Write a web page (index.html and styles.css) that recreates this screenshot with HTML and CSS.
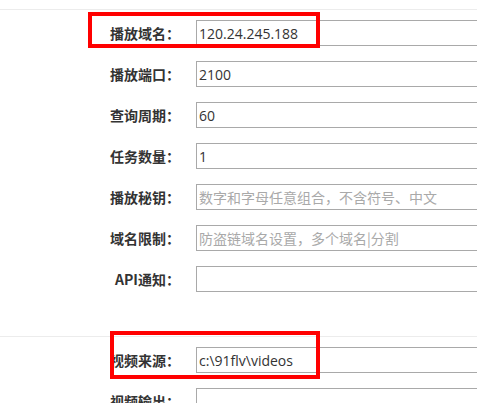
FILE: index.html
```html
<!DOCTYPE html>
<html lang="zh-CN">
<head>
<meta charset="utf-8">
<title>播放设置</title>
<link rel="stylesheet" href="styles.css">
</head>
<body>
<div class="page">
  <section class="group group-play">
    <div class="row"><label class="lbl">播放域名：</label><input class="field" type="text" value="120.24.245.188"></div>
    <div class="row"><label class="lbl">播放端口：</label><input class="field" type="text" value="2100"></div>
    <div class="row"><label class="lbl">查询周期：</label><input class="field" type="text" value="60"></div>
    <div class="row"><label class="lbl">任务数量：</label><input class="field" type="text" value="1"></div>
    <div class="row"><label class="lbl">播放秘钥：</label><input class="field" type="text" placeholder="数字和字母任意组合，不含符号、中文"></div>
    <div class="row"><label class="lbl">域名限制：</label><input class="field" type="text" placeholder="防盗链域名设置，多个域名|分割"></div>
    <div class="row"><label class="lbl">API通知：</label><input class="field" type="text"></div>
  </section>
  <section class="group group-video">
    <div class="row"><label class="lbl">视频来源：</label><input class="field" type="text" value="c:\91flv\videos"></div>
    <div class="row"><label class="lbl">视频输出：</label><input class="field" type="text"></div>
  </section>
  <div class="mark mark-domain"></div>
  <div class="mark mark-source"></div>
</div>
</body>
</html>
```

FILE: styles.css
```css
html, body {
  margin: 0;
  padding: 0;
  overflow: hidden;
  background: #fff;
}

.page {
  position: relative;
  padding-top: 9px;
  width: 477px;
  height: 403px;
  overflow: hidden;
  font-family: "Noto Sans CJK SC", sans-serif;
}

.group {
  border-top: 1px solid #ececec;
  padding-top: 10px;
}

.group-play {
  padding-bottom: 29px;
}

.row {
  display: flex;
  align-items: center;
  height: 26px;
  margin-bottom: 15px;
}

.lbl {
  flex: 0 0 180px;
  margin-right: 16px;
  text-align: right;
  font-family: "Noto Sans CJK SC", sans-serif;
  font-weight: bold;
  font-size: 14px;
  line-height: 26px;
  color: #333;
  white-space: nowrap;
}

.field {
  flex: 0 0 320px;
  box-sizing: border-box;
  height: 26px;
  margin: 0;
  padding: 0 2px;
  border: 1px solid #a9a9a9;
  border-radius: 0;
  outline: none;
  background: #fff;
  font-family: "Open Sans", "Noto Sans CJK SC", sans-serif;
  font-size: 14px;
  color: #333;
}

.field::placeholder {
  font-family: "Noto Sans CJK SC", sans-serif;
  font-size: 14px;
  color: #a9a9a9;
  opacity: 1;
}

.mark {
  position: absolute;
  box-sizing: border-box;
  border: 4px solid #ff0000;
}

.mark-domain {
  left: 88px;
  top: 12px;
  width: 232px;
  height: 36px;
}

.mark-source {
  left: 110px;
  top: 331px;
  width: 210px;
  height: 48px;
}
```
